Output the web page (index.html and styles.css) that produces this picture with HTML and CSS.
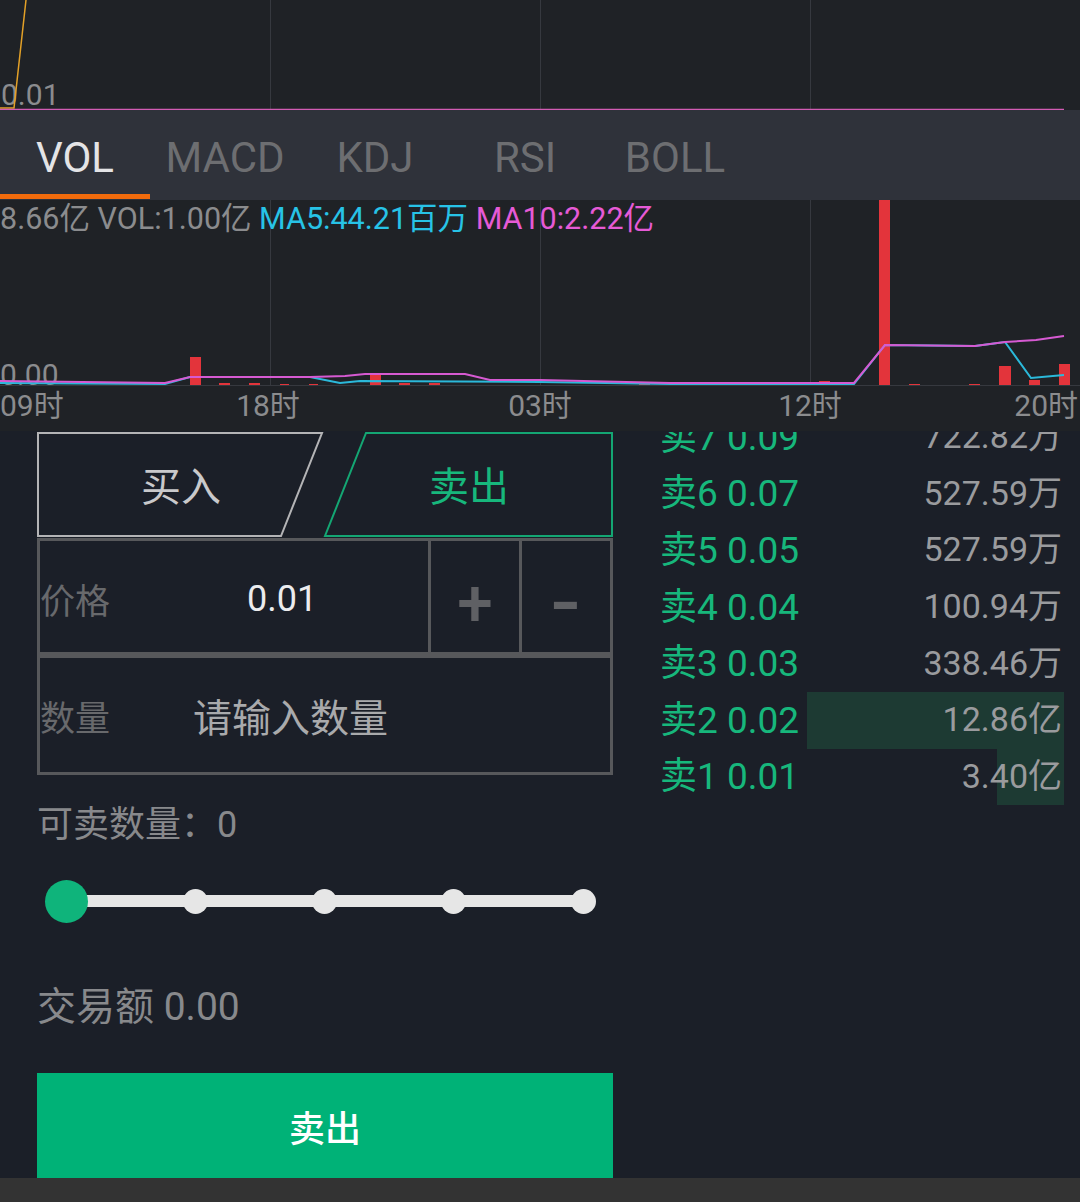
FILE: index.html
```html
<!DOCTYPE html>
<html lang="zh-CN">
<head>
    <meta charset="UTF-8">
    <meta name="viewport" content="width=device-width, initial-scale=1.0">
    <title>卖出</title>
    <link rel="stylesheet" href="styles.css">
</head>
<body>
    <!-- K-line chart (bottom part visible) -->
    <div class="kline">
        <svg class="chart" width="1080" height="110" viewBox="0 0 1080 110">
            <line x1="270.5" y1="0" x2="270.5" y2="109" class="grid" />
            <line x1="540.5" y1="0" x2="540.5" y2="109" class="grid" />
            <line x1="810.5" y1="0" x2="810.5" y2="109" class="grid" />
            <text x="1" y="105" class="axis-text">0.01</text>
            <polyline points="26,0 14,108 0,108" fill="none" stroke="#e3a127" stroke-width="1.5" />
            <line x1="0" y1="109.5" x2="1064" y2="109.5" stroke="#d25cb4" stroke-width="1.5" />
        </svg>
    </div>

    <nav class="ind-tabs">
        <span class="ind-tab active">VOL</span>
        <span class="ind-tab">MACD</span>
        <span class="ind-tab">KDJ</span>
        <span class="ind-tab">RSI</span>
        <span class="ind-tab">BOLL</span>
    </nav>

    <section class="vol-panel">
        <svg class="chart" width="1080" height="231" viewBox="0 0 1080 231">
            <line x1="270.5" y1="0" x2="270.5" y2="186" class="grid" />
            <line x1="540.5" y1="0" x2="540.5" y2="186" class="grid" />
            <line x1="810.5" y1="0" x2="810.5" y2="186" class="grid" />
            <line x1="0" y1="185.5" x2="1080" y2="185.5" class="grid" />
            <text x="0" y="185" class="axis-text">0.00</text>

            <!-- volume bars -->
            <g fill="#e3343b">
                <rect x="190" y="157" width="11" height="28" />
                <rect x="219" y="183" width="11" height="2" />
                <rect x="249" y="183" width="11" height="2" />
                <rect x="280" y="184" width="9" height="1" />
                <rect x="309" y="184" width="9" height="1" />
                <rect x="370" y="175" width="11" height="10" />
                <rect x="399" y="183" width="11" height="2" />
                <rect x="429" y="183" width="11" height="2" />
                <rect x="639" y="183" width="11" height="2" />
                <rect x="819" y="181" width="11" height="4" />
                <rect x="879" y="0" width="11" height="185" />
                <rect x="909" y="184" width="11" height="1" />
                <rect x="969" y="184" width="11" height="1" />
                <rect x="999" y="166" width="12" height="19" />
                <rect x="1029" y="180" width="11" height="5" />
                <rect x="1059" y="164" width="11" height="21" />
            </g>

            <!-- MA5 / MA10 -->
            <polyline fill="none" stroke="#2bb9da" stroke-width="2"
                points="0,183 165,184 190,177 310,177 340,183 360,181 540,182 670,184 854,184 885,145 975,146 1005,142 1031,178 1064,175" />
            <polyline fill="none" stroke="#d65ad2" stroke-width="2"
                points="0,181 165,183 190,177 310,177 345,176 365,174 465,174 490,180 540,180 670,183 854,183 885,145 975,146 1005,142 1036,140 1064,136" />

            <text x="0" y="216" class="axis-text">09时</text>
            <text x="268" y="216" class="axis-text" text-anchor="middle">18时</text>
            <text x="540" y="216" class="axis-text" text-anchor="middle">03时</text>
            <text x="810" y="216" class="axis-text" text-anchor="middle">12时</text>
            <text x="1078" y="216" class="axis-text" text-anchor="end">20时</text>
        </svg>
        <div class="vol-legend">
            <span class="lg-vol">8.66亿 VOL:1.00亿</span>
            <span class="lg-ma5">MA5:44.21百万</span>
            <span class="lg-ma10">MA10:2.22亿</span>
        </div>
    </section>

    <main class="trade">
        <div class="order-form">
            <div class="side-tabs">
                <svg class="side-shape" width="576" height="106" viewBox="0 0 576 106">
                    <polygon points="1,1 285,1 244,104 1,104" fill="none" stroke="#b4b4b6" stroke-width="2" />
                    <polygon points="329,1 575,1 575,104 288,104" fill="none" stroke="#14a673" stroke-width="2" />
                </svg>
                <span class="side">买入</span>
                <span class="side sell">卖出</span>
            </div>

            <div class="field">
                <div class="price-main">
                    <span class="field-label">价格</span>
                    <span class="price-value">0.01</span>
                </div>
                <span class="step">+</span>
                <span class="step"><span class="minus-glyph">-</span></span>
            </div>

            <div class="field qty">
                <span class="field-label">数量</span>
                <span class="placeholder">请输入数量</span>
            </div>

            <div class="avail">可卖数量：0</div>

            <div class="slider">
                <span class="stop"><i class="knob"></i></span>
                <span class="stop"><i class="dot"></i></span>
                <span class="stop"><i class="dot"></i></span>
                <span class="stop"><i class="dot"></i></span>
                <span class="stop"><i class="dot"></i></span>
            </div>

            <div class="amount">交易额 0.00</div>

            <button class="submit">卖出</button>
        </div>

        <div class="book">
            <div class="book-list">
                <div class="book-row"><span class="ask">卖7 0.09</span><span class="qty-text">722.82万</span></div>
                <div class="book-row"><span class="ask">卖6 0.07</span><span class="qty-text">527.59万</span></div>
                <div class="book-row"><span class="ask">卖5 0.05</span><span class="qty-text">527.59万</span></div>
                <div class="book-row"><span class="ask">卖4 0.04</span><span class="qty-text">100.94万</span></div>
                <div class="book-row"><span class="ask">卖3 0.03</span><span class="qty-text">338.46万</span></div>
                <div class="book-row" style="--depth: 257px"><span class="ask">卖2 0.02</span><span class="qty-text">12.86亿</span></div>
                <div class="book-row" style="--depth: 67px"><span class="ask">卖1 0.01</span><span class="qty-text">3.40亿</span></div>
            </div>
        </div>
    </main>

    <div class="nav-bar"></div>
</body>
</html>
```

FILE: styles.css
```css
body {
    margin: 0;
    width: 1080px;
    background-color: #1b1f28;
    font-family: Roboto, "Noto Sans CJK SC", sans-serif;
    overflow: hidden;
}
.chart {
    display: block;
}
.chart .grid {
    stroke: #36393f;
    stroke-width: 1;
}
.axis-text {
    font-family: Roboto, "Noto Sans CJK SC", sans-serif;
    font-size: 30px;
    fill: #8b8c8e;
}
.kline {
    height: 110px;
    background-color: #1f2226;
}

/* indicator tabs */
.ind-tabs {
    display: flex;
    height: 90px;
    background-color: #2f323a;
}
.ind-tab {
    box-sizing: border-box;
    width: 150px;
    height: 89px;
    padding-top: 10px;
    display: flex;
    align-items: center;
    justify-content: center;
    font-size: 42px;
    color: #6d6e71;
    border-bottom: 5px solid transparent;
}
.ind-tab.active {
    color: #e4e4e6;
    border-bottom-color: #f26b0c;
}

/* volume panel */
.vol-panel {
    position: relative;
    height: 231px;
    background-color: #1f2226;
}
.vol-legend {
    position: absolute;
    top: 0;
    left: 0;
    line-height: 37px;
    font-size: 30.5px;
    white-space: nowrap;
}
.lg-vol { color: #8b8c8e; }
.lg-ma5 { color: #27c3e6; }
.lg-ma10 { color: #e65ad6; }

/* trade area */
.trade {
    display: flex;
    height: 747px;
    padding: 1px 0 0 37px;
    box-sizing: border-box;
    overflow: hidden;
}
.order-form {
    width: 576px;
    display: flex;
    flex-direction: column;
}
.side-tabs {
    position: relative;
    display: flex;
    height: 106px;
    flex-shrink: 0;
}
.side-shape {
    position: absolute;
    top: 0;
    left: 0;
}
.side {
    position: relative;
    flex: 1;
    display: flex;
    align-items: center;
    justify-content: center;
    padding-bottom: 2px;
    font-size: 40px;
    color: #c9c9cb;
}
.side.sell {
    color: #17b77c;
}
.field {
    box-sizing: border-box;
    display: flex;
    height: 117px;
    flex-shrink: 0;
    border: 3px solid #57585b;
}
.field.qty {
    height: 120px;
    align-items: center;
}
.price-main {
    flex: 1;
    display: flex;
    align-items: center;
    padding-top: 4px;
}
.field-label {
    width: 70px;
    font-size: 35px;
    color: #68696c;
}
.price-value {
    margin-left: 137px;
    font-size: 36px;
    color: #ececee;
}
.placeholder {
    margin-left: 83px;
    font-size: 39px;
    color: #a9aaac;
}
.step {
    box-sizing: border-box;
    width: 91px;
    display: flex;
    align-items: center;
    justify-content: center;
    border-left: 3px solid #57585b;
    padding-top: 14px;
    font-size: 64px;
    font-weight: 500;
    color: #5f6064;
}
.minus-glyph {
    display: inline-block;
    font-weight: 700;
    transform: scaleX(1.3);
}
.avail {
    margin-top: 32px;
    line-height: 36px;
    font-size: 36px;
    color: #88898c;
}
.slider {
    display: flex;
    justify-content: space-between;
    align-items: center;
    height: 12px;
    margin: 52px 30px 0 29px;
    background-color: #e6e6e6;
    flex-shrink: 0;
}
.stop {
    width: 0;
    height: 12px;
    display: flex;
    align-items: center;
    justify-content: center;
}
.dot {
    flex-shrink: 0;
    width: 25px;
    height: 25px;
    border-radius: 50%;
    background-color: #e6e6e6;
}
.knob {
    flex-shrink: 0;
    width: 43px;
    height: 43px;
    border-radius: 50%;
    background-color: #0fb47b;
}
.amount {
    margin-top: 80px;
    line-height: 40px;
    font-size: 39px;
    color: #88898c;
}
.submit {
    margin-top: 46px;
    height: 105px;
    flex-shrink: 0;
    border: none;
    background-color: #00b277;
    color: #ffffff;
    font-family: Roboto, "Noto Sans CJK SC", sans-serif;
    font-size: 36px;
    font-weight: 500;
}

/* order book */
.book {
    width: 404px;
    margin-left: 47px;
    overflow: hidden;
}
.book-list {
    margin-top: -23px;
}
.book-row {
    --depth: 0px;
    box-sizing: border-box;
    display: flex;
    justify-content: space-between;
    align-items: center;
    height: 56.6px;
    padding: 0 2px 7px 0;
    background: linear-gradient(to left, #1d3a33 var(--depth), transparent var(--depth));
}
.ask {
    font-size: 37px;
    color: #17b77c;
    white-space: pre;
}
.qty-text {
    font-size: 34px;
    color: #9a9b9e;
}
.nav-bar {
    height: 24px;
    background-color: #333333;
}
```
